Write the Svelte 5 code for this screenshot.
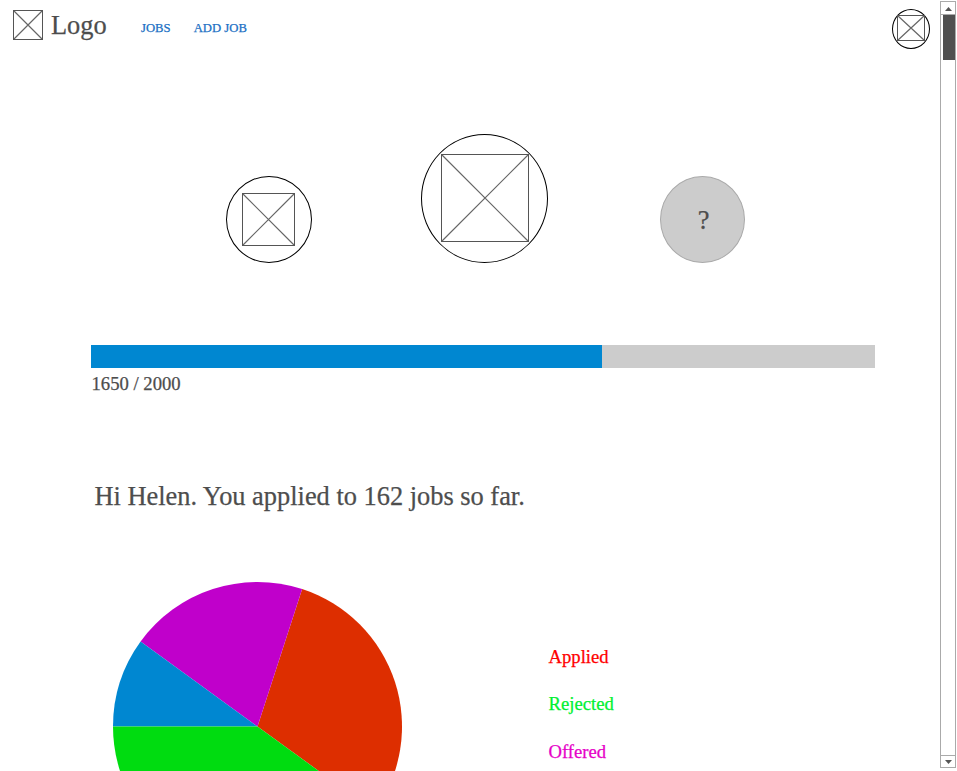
<script>
  const links = ['JOBS', 'ADD JOB'];
  const points = 1650;
  const goal = 2000;

  const legend = [
    { label: 'Applied', color: '#ff0000' },
    { label: 'Rejected', color: '#00f032' },
    { label: 'Offered', color: '#e600c8' }
  ];

  const radius = 144.5;
  // Slice angles in degrees, counter-clockwise from the positive x axis.
  const slices = [
    { from: -36, to: 72, color: '#dd2e00' },
    { from: 72, to: 144, color: '#c000cb' },
    { from: 144, to: 180, color: '#0087d1' },
    { from: 180, to: 324, color: '#00dc10' }
  ];

  function point(deg) {
    const a = (deg * Math.PI) / 180;
    return `${radius + radius * Math.cos(a)} ${radius - radius * Math.sin(a)}`;
  }

  function slicePath(s) {
    return `M${radius} ${radius}L${point(s.from)}A${radius} ${radius} 0 0 0 ${point(s.to)}Z`;
  }
</script>

{#snippet placeholder(w, h)}
  <svg class="placeholder" width={w} height={h} viewBox="0 0 {w} {h}">
    <path d="M.5 .5L{w - 0.5} {h - 0.5}M{w - 0.5} .5L.5 {h - 0.5}" stroke="#666" stroke-width="1.2" />
    <rect x=".5" y=".5" width={w - 1} height={h - 1} fill="none" stroke="#555" />
  </svg>
{/snippet}

<div class="page">
  <main>
    <header>
      {@render placeholder(30, 30)}
      <span class="logo">Logo</span>
      <nav>
        {#each links as link}<a href="#top">{link}</a>{/each}
      </nav>
      <div class="ring avatar">{@render placeholder(28, 26)}</div>
    </header>

    <section class="badges">
      <div class="ring small">{@render placeholder(53, 53)}</div>
      <div class="ring large">{@render placeholder(88, 88)}</div>
      <div class="ring locked"><span>?</span></div>
    </section>

    <section class="progress">
      <div class="track"><div class="fill"></div></div>
      <div class="count">{points} / {goal}</div>
    </section>

    <h1>Hi Helen. You applied to 162 jobs so far.</h1>

    <section class="stats">
      <svg class="pie" width="289" height="289" viewBox="0 0 289 289">
        {#each slices as s}
          <path d={slicePath(s)} fill={s.color} />
        {/each}
      </svg>
      <ul>
        {#each legend as item}
          <li style="color: {item.color}">{item.label}</li>
        {/each}
      </ul>
    </section>
  </main>

  <div class="scrollbar">
    <div class="arrow"><svg width="7" height="4"><path d="M3.5 0L7 4H0Z" fill="#555" /></svg></div>
    <div class="rail"><div class="thumb"></div></div>
    <div class="arrow down"><svg width="7" height="4"><path d="M0 0H7L3.5 4Z" fill="#555" /></svg></div>
  </div>
</div>

<style>
  :global(body) {
    margin: 0;
    background: #fff;
  }
  .page {
    display: flex;
    width: 957px;
    height: 771px;
    overflow: hidden;
    font-family: 'Liberation Serif', 'Times New Roman', serif;
    color: #4d4d4d;
    -webkit-text-stroke: 0.25px currentColor;
  }
  main {
    width: 940px;
    height: 771px;
    overflow: hidden;
  }
  svg {
    display: block;
    flex: none;
  }
  header {
    display: flex;
    align-items: flex-start;
    box-sizing: border-box;
    height: 134px;
    padding: 10px 10px 0 13px;
  }
  .logo {
    width: 90px;
    margin: 0 0 0 8px;
    font-size: 26.4px;
    line-height: 30px;
  }
  nav {
    display: flex;
    flex: 1;
    gap: 23px;
    padding-top: 10px;
  }
  nav a {
    color: #1a6fc4;
    font-size: 12.7px;
    line-height: 16px;
    text-decoration: none;
    white-space: nowrap;
  }
  .ring {
    display: flex;
    flex: none;
    align-items: center;
    justify-content: center;
    box-sizing: border-box;
    border: 1px solid #000;
    border-radius: 50%;
  }
  .avatar {
    width: 38px;
    height: 40px;
    margin-top: -1px;
    align-items: flex-start;
    padding-top: 5px;
  }
  .badges {
    display: flex;
    align-items: flex-end;
    height: 129px;
    padding-left: 226px;
  }
  .small {
    width: 86px;
    height: 87px;
    margin-right: 109px;
    padding-right: 1px;
  }
  .large {
    width: 127px;
    height: 129px;
    margin-right: 112px;
    align-items: flex-start;
    padding: 19px 0 0 1px;
  }
  .locked {
    width: 85px;
    height: 87px;
    padding-left: 2px;
    border-color: #aaa;
    background: #ccc;
    font-size: 26.4px;
    line-height: 30px;
  }
  .progress {
    padding: 82px 65px 0 91px;
  }
  .track {
    height: 23px;
    background: #ccc;
  }
  .fill {
    width: 511px;
    height: 23px;
    background: #0087d1;
  }
  .count {
    padding: 5px 0 0 0.5px;
    font-size: 18.67px;
    line-height: 22px;
  }
  h1 {
    margin: 86px 0 0 94.5px;
    font-size: 26.4px;
    font-weight: 400;
    line-height: 30px;
  }
  .stats {
    display: flex;
    margin-top: 71px;
    padding-left: 113px;
  }
  ul {
    margin: 64px 0 0 146.5px;
    padding: 0;
    list-style: none;
    font-size: 18.67px;
  }
  li {
    height: 22px;
    margin-bottom: 25.4px;
    line-height: 22px;
  }
  .scrollbar {
    display: flex;
    flex-direction: column;
    box-sizing: border-box;
    width: 16px;
    height: 767px;
    margin-top: 1px;
    border: 1px solid #aaa;
  }
  .arrow {
    display: flex;
    align-items: center;
    justify-content: center;
    height: 11px;
    padding: 1px 0 0 1px;
    border-bottom: 1px solid #aaa;
    box-sizing: content-box;
  }
  .down {
    border-bottom: 0;
    border-top: 1px solid #aaa;
    height: 10px;
  }
  .rail {
    flex: 1;
    padding-left: 2px;
  }
  .thumb {
    height: 45px;
    background: #505050;
  }
</style>
